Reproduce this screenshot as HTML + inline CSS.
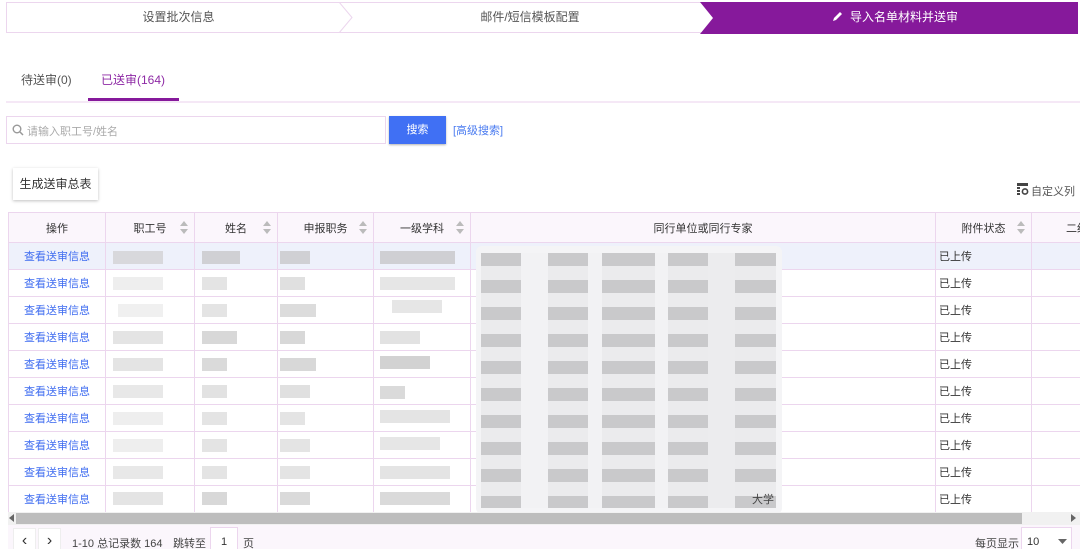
<!DOCTYPE html>
<html><head><meta charset="utf-8">
<style>
*{margin:0;padding:0;box-sizing:border-box}
body{width:1080px;height:557px;background:#fff;font-family:"Liberation Sans","Noto Sans CJK SC",sans-serif;font-size:11px;color:#333;position:relative;overflow:hidden}
.abs{position:absolute}
.step{position:absolute;top:2px;height:31px;line-height:31px;text-align:center;color:#555;font-size:12px}
table{position:absolute;left:8px;top:212px;border-collapse:collapse;table-layout:fixed;width:1080px}
td,th{border:1px solid #ecd6ee;height:27px;font-weight:normal;font-size:11px;white-space:nowrap;overflow:hidden}
th{background:#fbf6fc;height:30px;color:#333;position:relative}
td.op{color:#3f6cf0;text-align:center}
tr.hl td{background:#eef1fb}
.sort{position:absolute;right:6px;top:8px;width:8px;height:14px}
.sort:before{content:"";position:absolute;left:0;top:0;border:4px solid transparent;border-bottom:5px solid #bbb;border-top:0}
.sort:after{content:"";position:absolute;left:0;top:8px;border:4px solid transparent;border-top:5px solid #bbb;border-bottom:0}
.g{position:absolute;height:13px;background:#ddd}
</style></head><body>
<div class="abs" style="left:6px;top:2px;width:1070px;height:31px;border:1px solid #ecd6ee;background:#fff"></div>
<div class="step" style="left:6px;width:345px">设置批次信息</div>
<svg class="abs" style="left:338px;top:2px" width="20" height="31"><polyline points="1,0 14,15.5 1,31" fill="none" stroke="#ecd6ee"/></svg>
<div class="step" style="left:350px;width:360px">邮件/短信模板配置</div>
<svg class="abs" style="left:700px;top:2px" width="378" height="32"><polygon points="0,0 378,0 378,32 0,32 13,16" fill="#86199b"/></svg>
<div class="step" style="left:712px;width:366px;color:#fff"><svg width="12" height="12" style="vertical-align:-1px;margin-right:6px" viewBox="0 0 12 12"><path d="M1 11 L2 8 L8 2 L10 4 L4 10 Z" fill="#fff"/></svg>导入名单材料并送审</div>
<div class="abs" style="left:21px;top:71px;font-size:12px;color:#555">待送审(0)</div>
<div class="abs" style="left:101px;top:71px;font-size:12px;color:#8e2aa5">已送审(164)</div>
<div class="abs" style="left:6px;top:101px;width:1074px;height:2px;background:#f5e8f6"></div>
<div class="abs" style="left:88px;top:98px;width:91px;height:3px;background:#86199b"></div>
<div class="abs" style="left:6px;top:116px;width:380px;height:28px;border:1px solid #ecd6ee"></div>
<svg class="abs" style="left:12px;top:124px" width="12" height="12"><circle cx="5" cy="5" r="3.8" fill="none" stroke="#999" stroke-width="1.4"/><line x1="8" y1="8" x2="11" y2="11" stroke="#999" stroke-width="1.5"/></svg>
<div class="abs" style="left:27px;top:123px;color:#aaa;font-size:11px">请输入职工号/姓名</div>
<div class="abs" style="left:389px;top:116px;width:57px;height:28px;background:#4070f4;color:#fff;text-align:center;line-height:28px;box-shadow:0 1px 2px rgba(0,0,0,.3)">搜索</div>
<div class="abs" style="left:453px;top:122px;color:#4a7bf0">[高级搜索]</div>
<div class="abs" style="left:13px;top:168px;width:85px;height:32px;line-height:32px;text-align:center;font-size:12px;box-shadow:0 1px 3px rgba(0,0,0,.25);background:#fff">生成送审总表</div>
<svg class="abs" style="left:1017px;top:183px" width="12" height="12"><rect x="0" y="0" width="11" height="3" fill="#444"/><rect x="0" y="4" width="3" height="2" fill="#444"/><rect x="0" y="7" width="3" height="2" fill="#444"/><rect x="0" y="10" width="3" height="2" fill="#444"/><circle cx="8" cy="8.5" r="2.6" fill="none" stroke="#444" stroke-width="1.6"/></svg>
<div class="abs" style="left:1031px;top:183px;color:#555;font-size:11px">自定义列</div>
<table>
<colgroup><col style="width:97px"><col style="width:89px"><col style="width:83px"><col style="width:96px"><col style="width:97px"><col style="width:465px"><col style="width:96px"><col style="width:57px"></colgroup>
<tr><th>操作</th><th>职工号<span class="sort"></span></th><th>姓名<span class="sort"></span></th><th>申报职务<span class="sort"></span></th><th>一级学科<span class="sort"></span></th><th>同行单位或同行专家</th><th>附件状态<span class="sort"></span></th><th style="text-align:right">二级</th></tr>
<tr class="hl"><td class="op">查看送审信息</td><td></td><td></td><td></td><td></td><td></td><td>&nbsp;已上传</td><td></td></tr>
<tr><td class="op">查看送审信息</td><td></td><td></td><td></td><td></td><td></td><td>&nbsp;已上传</td><td></td></tr>
<tr><td class="op">查看送审信息</td><td></td><td></td><td></td><td></td><td></td><td>&nbsp;已上传</td><td></td></tr>
<tr><td class="op">查看送审信息</td><td></td><td></td><td></td><td></td><td></td><td>&nbsp;已上传</td><td></td></tr>
<tr><td class="op">查看送审信息</td><td></td><td></td><td></td><td></td><td></td><td>&nbsp;已上传</td><td></td></tr>
<tr><td class="op">查看送审信息</td><td></td><td></td><td></td><td></td><td></td><td>&nbsp;已上传</td><td></td></tr>
<tr><td class="op">查看送审信息</td><td></td><td></td><td></td><td></td><td></td><td>&nbsp;已上传</td><td></td></tr>
<tr><td class="op">查看送审信息</td><td></td><td></td><td></td><td></td><td></td><td>&nbsp;已上传</td><td></td></tr>
<tr><td class="op">查看送审信息</td><td></td><td></td><td></td><td></td><td></td><td>&nbsp;已上传</td><td></td></tr>
<tr><td class="op">查看送审信息</td><td></td><td></td><td></td><td></td><td></td><td>&nbsp;已上传</td><td></td></tr>
</table>
<div class="abs" style="left:0;top:0">
<div class="g" style="left:113px;top:251px;width:50px;background:#d8d8dc"></div><div class="g" style="left:202px;top:251px;width:38px;background:#d0d0d4"></div><div class="g" style="left:280px;top:251px;width:30px;background:#d0d0d4"></div><div class="g" style="left:380px;top:251px;width:75px;background:#cfcfd3"></div>
<div class="g" style="left:113px;top:277px;width:50px;background:#eee"></div><div class="g" style="left:202px;top:277px;width:25px;background:#e4e4e4"></div><div class="g" style="left:280px;top:277px;width:25px;background:#e0e0e0"></div><div class="g" style="left:380px;top:277px;width:75px;background:#e6e6e6"></div>
<div class="g" style="left:118px;top:304px;width:45px;background:#f0f0f0"></div><div class="g" style="left:202px;top:304px;width:25px;background:#e4e4e4"></div><div class="g" style="left:280px;top:304px;width:36px;background:#dcdcdc"></div><div class="g" style="left:392px;top:300px;width:50px;background:#e6e6e6"></div>
<div class="g" style="left:113px;top:331px;width:50px;background:#e4e4e4"></div><div class="g" style="left:202px;top:331px;width:35px;background:#d8d8d8"></div><div class="g" style="left:280px;top:331px;width:25px;background:#d8d8d8"></div><div class="g" style="left:380px;top:331px;width:40px;background:#e2e2e2"></div>
<div class="g" style="left:113px;top:358px;width:50px;background:#e4e4e4"></div><div class="g" style="left:202px;top:358px;width:25px;background:#dadada"></div><div class="g" style="left:280px;top:358px;width:36px;background:#d8d8d8"></div><div class="g" style="left:380px;top:356px;width:50px;background:#d2d2d2"></div>
<div class="g" style="left:113px;top:385px;width:50px;background:#e8e8e8"></div><div class="g" style="left:202px;top:385px;width:25px;background:#e2e2e2"></div><div class="g" style="left:280px;top:385px;width:30px;background:#e0e0e0"></div><div class="g" style="left:380px;top:386px;width:25px;background:#dadada"></div>
<div class="g" style="left:113px;top:412px;width:50px;background:#eee"></div><div class="g" style="left:202px;top:412px;width:25px;background:#e4e4e4"></div><div class="g" style="left:280px;top:412px;width:25px;background:#e4e4e4"></div><div class="g" style="left:380px;top:410px;width:70px;background:#e4e4e4"></div>
<div class="g" style="left:113px;top:439px;width:50px;background:#eee"></div><div class="g" style="left:202px;top:439px;width:25px;background:#e4e4e4"></div><div class="g" style="left:280px;top:439px;width:30px;background:#e4e4e4"></div><div class="g" style="left:380px;top:437px;width:60px;background:#e6e6e6"></div>
<div class="g" style="left:113px;top:466px;width:50px;background:#e8e8e8"></div><div class="g" style="left:202px;top:466px;width:25px;background:#e4e4e4"></div><div class="g" style="left:280px;top:466px;width:30px;background:#e4e4e4"></div><div class="g" style="left:380px;top:466px;width:70px;background:#e4e4e4"></div>
<div class="g" style="left:113px;top:492px;width:50px;background:#e4e4e4"></div><div class="g" style="left:202px;top:492px;width:25px;background:#d8d8d8"></div><div class="g" style="left:280px;top:492px;width:30px;background:#dadada"></div><div class="g" style="left:380px;top:492px;width:70px;background:#dadada"></div>
</div>
<div class="abs" style="left:476px;top:246px;width:306px;height:268px;background:#f4f4f6;border-radius:6px"></div>
<div class="abs" style="left:481px;top:253px;width:295px;height:255px;
background:
linear-gradient(90deg,transparent 0 40px,#f2f2f4 40px 67px,transparent 67px 107px,#f2f2f4 107px 121px,transparent 121px 174px,#f2f2f4 174px 187px,transparent 187px 227px,#ececee 227px 254px,transparent 254px),
repeating-linear-gradient(180deg,#c9c9cb 0 13px,#ebebed 13px 27px)"></div>
<div class="abs" style="left:752px;top:491px;font-size:11px;color:#444">大学</div>
<div class="abs" style="left:8px;top:512px;width:1072px;height:13px;background:#f1f1f1"></div>
<div class="abs" style="left:16px;top:513px;width:1006px;height:11px;background:#bdbdbd"></div>
<svg class="abs" style="left:9px;top:514px" width="6" height="8"><polygon points="5,0 0,4 5,8" fill="#666"/></svg>
<svg class="abs" style="left:1071px;top:514px" width="6" height="8"><polygon points="0,0 5,4 0,8" fill="#666"/></svg>
<div class="abs" style="left:8px;top:525px;width:1072px;height:32px;background:#fbf6fc"></div>
<div class="abs" style="left:13px;top:528px;width:23px;height:26px;border:1px solid #eee;background:#fff;text-align:center;line-height:24px;font-size:16px">&#8249;</div>
<div class="abs" style="left:38px;top:528px;width:23px;height:26px;border:1px solid #eee;background:#fff;text-align:center;line-height:24px;font-size:16px">&#8250;</div>
<div class="abs" style="left:72px;top:535px;color:#444">1-10 总记录数 164</div>
<div class="abs" style="left:173px;top:535px;color:#444">跳转至</div>
<div class="abs" style="left:210px;top:527px;width:28px;height:30px;border:1px solid #ecd6ee;background:#fff;text-align:center;line-height:28px">1</div>
<div class="abs" style="left:243px;top:535px;color:#444">页</div>
<div class="abs" style="left:975px;top:535px;color:#444">每页显示</div>
<div class="abs" style="left:1021px;top:527px;width:51px;height:30px;border:1px solid #ecd6ee;background:#fff;line-height:28px;padding-left:5px">10</div>
<svg class="abs" style="left:1058px;top:539px" width="9" height="6"><polygon points="0,0 9,0 4.5,5" fill="#666"/></svg>
<div class="abs" style="left:0;top:549px;width:1080px;height:8px;background:#fff"></div>
</body></html>
